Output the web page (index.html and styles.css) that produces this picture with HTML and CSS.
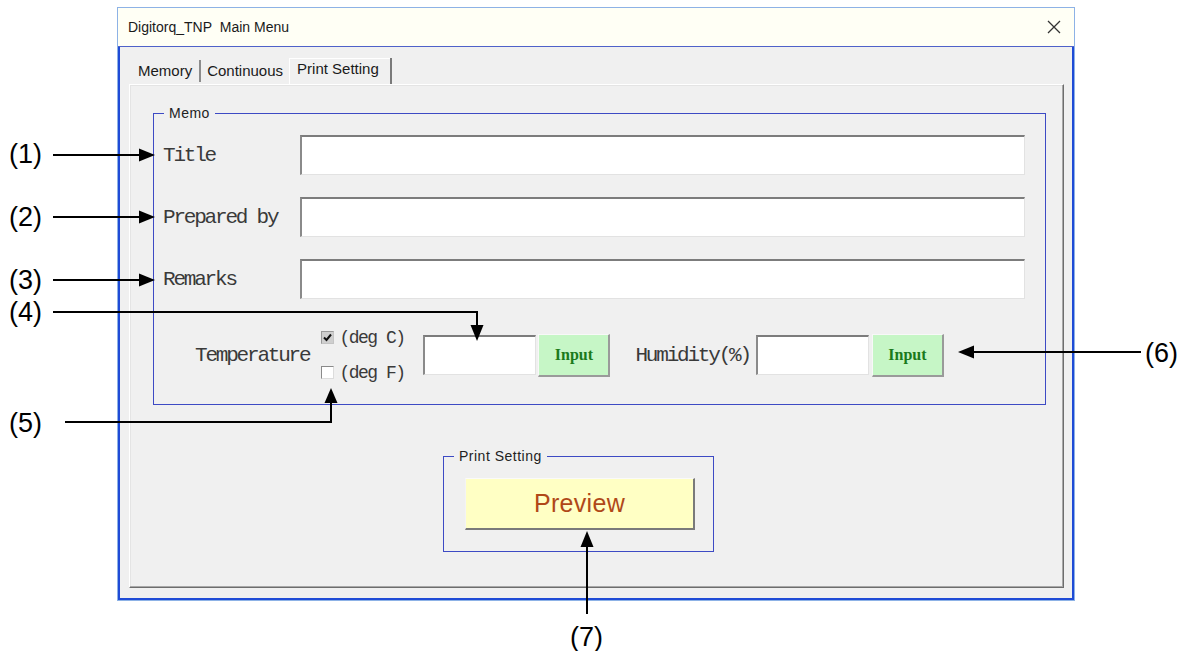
FILE: index.html
```html
<!DOCTYPE html>
<html lang="en">
<head>
  <meta charset="UTF-8">
  <title>Digitorq_TNP Main Menu</title>
  <link rel="stylesheet" href="styles.css">
</head>
<body>

<div class="page">
  <div class="window">
    <div class="titlebar">
      <span class="caption">Digitorq_TNP&nbsp; Main Menu</span>
      <svg class="close" width="14" height="14" viewBox="0 0 14 14">
        <path d="M1 1L13 13M13 1L1 13" stroke="#333" stroke-width="1.3" fill="none"/>
      </svg>
    </div>

    <div class="client">
      <div class="tabs">
        <span class="tab tab-memory">Memory</span>
        <span class="tab tab-cont">Continuous</span>
        <span class="tab tab-print active">Print Setting</span>
      </div>

      <div class="panel">
        <div class="group memo">
          <span class="legend">Memo</span>

          <div class="field">
            <span class="lbl">Title</span>
            <div class="textbox wide"></div>
          </div>
          <div class="field">
            <span class="lbl">Prepared by</span>
            <div class="textbox wide"></div>
          </div>
          <div class="field">
            <span class="lbl">Remarks</span>
            <div class="textbox wide"></div>
          </div>

          <div class="temp-row">
            <span class="lbl temp-lbl">Temperature</span>
            <div class="units">
              <div class="unit">
                <span class="check on">
                  <svg width="11" height="11" viewBox="0 0 11 11"><path d="M2 5.5L4.5 8L9 2.5" stroke="#111" stroke-width="2" fill="none"/></svg>
                </span>(deg C)
              </div>
              <div class="unit"><span class="check"></span>(deg F)</div>
            </div>
            <div class="textbox small temp-box"></div>
            <button class="input-btn">Input</button>
            <span class="lbl hum-lbl">Humidity(%)</span>
            <div class="textbox small hum-box"></div>
            <button class="input-btn hum-btn">Input</button>
          </div>
        </div>

        <div class="group print">
          <span class="legend">Print Setting</span>
          <button class="preview">Preview</button>
        </div>
      </div>
    </div>
  </div>

  <!-- callout arrows and numbers drawn over the screenshot -->
  <svg class="callouts" width="1189" height="651" viewBox="0 0 1189 651">
    <g stroke="#000" stroke-width="2" fill="none">
      <path d="M53 155H140"/>
      <path d="M53 217H140"/>
      <path d="M53 280H140"/>
      <path d="M53 312H477V327"/>
      <path d="M65 422H331V402"/>
      <path d="M1141 352H972"/>
      <path d="M587 614V545"/>
    </g>
    <g fill="#000">
      <path d="M155 155L139 148.5V161.5Z"/>
      <path d="M155 217L139 210.5V223.5Z"/>
      <path d="M155 280L139 273.5V286.5Z"/>
      <path d="M477 341L470.5 325H483.5Z"/>
      <path d="M331 388L324.5 403H337.5Z"/>
      <path d="M958 352L974 345.5V358.5Z"/>
      <path d="M587 531L580.5 547H593.5Z"/>
    </g>
    <g class="nums">
      <text x="9" y="163">(1)</text>
      <text x="9" y="226">(2)</text>
      <text x="9" y="289">(3)</text>
      <text x="9" y="321">(4)</text>
      <text x="9" y="432">(5)</text>
      <text x="1145" y="362">(6)</text>
      <text x="570" y="646">(7)</text>
    </g>
  </svg>
</div>

</body>
</html>
```

FILE: styles.css
```css
body {
  margin: 0;
  background: #fff;
  font-family: "Liberation Sans", Arial, sans-serif;
}

.page {
  position: relative;
  width: 1189px;
  height: 651px;
  box-sizing: border-box;
  padding: 7px 0 0 117px;
  overflow: hidden;
}

.window {
  width: 958px;
  height: 594px;
  box-sizing: border-box;
  border: 1px solid #8db2e6;
  display: flex;
  flex-direction: column;
}

.titlebar {
  flex: none;
  height: 38px;
  background: #fffff5;
  border-bottom: 1px solid #4f62c9;
  display: flex;
  align-items: center;
  justify-content: space-between;
  padding: 0 13px 0 10px;
}

.caption {
  font-size: 14px;
  color: #1a1a1a;
}

.client {
  flex: 1;
  background: #f0f0f0;
  border: 2px solid #1f4bd6;
  border-top: none;
  padding: 11px 8px 10px 9px;
  display: flex;
  flex-direction: column;
}

/* tab strip */
.tabs {
  display: flex;
  align-items: flex-end;
  height: 26px;
  padding-left: 2px;
}

.tab {
  font-size: 15px;
  color: #1a1a1a;
  height: 22px;
  line-height: 22px;
  margin-bottom: 2px;
}

.tab-memory {
  padding: 0 7px;
  border-right: 2px solid #8c8c8c;
}

.tab-cont {
  padding: 0 6px;
}

.tab.active {
  height: 26px;
  line-height: 21px;
  margin-bottom: 0;
  padding: 0 11px 0 8px;
  border-right: 2px solid #7a7a7a;
  box-shadow: inset 1px 1px 0 #fff;
}

.panel {
  flex: 1;
  border: 1px solid;
  border-color: #fff #6d6d6d #6d6d6d #fff;
  box-shadow: inset -1px -1px 0 #a8a8a8, inset 1px 1px 0 #e4e4e4;
  padding: 28px 17px 0 23px;
}

/* frames */
.group {
  position: relative;
  box-sizing: border-box;
  border: 1px solid #3d4ac4;
}

.legend {
  position: absolute;
  top: -9px;
  left: 10px;
  padding: 0 5px;
  background: #f0f0f0;
  font-size: 14px;
  line-height: 16px;
  letter-spacing: 0.5px;
  color: #222;
}

.memo {
  height: 292px;
  padding: 21px 20px 0 9px;
}

.field {
  display: flex;
  align-items: center;
  height: 40px;
  margin-bottom: 22px;
}

.lbl {
  font-family: "Liberation Mono", "DejaVu Sans Mono", monospace;
  font-size: 21px;
  letter-spacing: -2.2px;
  color: #3a3a3a;
}

.field .lbl {
  width: 137px;
  flex: none;
}

.textbox {
  height: 40px;
  box-sizing: border-box;
  background: #fff;
  border-style: solid;
  border-width: 2px 1px 1px 2px;
  border-color: #7c7c7c #e2e2e2 #e2e2e2 #8a8a8a;
}

.textbox.wide {
  flex: 1;
}

.textbox.small {
  width: 113px;
  flex: none;
}

/* margin collapses with the field above, so 30px is the real gap */
.temp-row {
  display: flex;
  align-items: center;
  height: 52px;
  margin-top: 30px;
}

.temp-lbl {
  margin-left: 32px;
}

.units {
  width: 84px;
  margin-left: 12px;
  display: flex;
  flex-direction: column;
  gap: 17px;
}

.unit {
  display: flex;
  align-items: center;
  height: 18px;
  font-family: "Liberation Mono", "DejaVu Sans Mono", monospace;
  font-size: 18px;
  letter-spacing: -1.5px;
  color: #3a3a3a;
}

.check {
  width: 13px;
  height: 13px;
  box-sizing: border-box;
  margin-right: 5px;
  border: 1px solid;
  border-color: #8a8a8a #dcdcdc #dcdcdc #8a8a8a;
  background: #fff;
  display: flex;
  align-items: center;
  justify-content: center;
}

.check.on {
  background: #cfcfcf;
  border-color: #9a9a9a #c4c4c4 #c4c4c4 #9a9a9a;
}

.temp-box {
  margin-left: 18px;
}

.input-btn {
  width: 72px;
  height: 43px;
  margin-left: 2px;
  padding: 0;
  background: #c6f6c6;
  border-style: solid;
  border-width: 1px 2px 2px 1px;
  border-color: #f8f8f8 #9a9a9a #9a9a9a #f8f8f8;
  font-family: "Liberation Serif", "Times New Roman", serif;
  font-weight: bold;
  font-size: 16px;
  color: #1b7a1b;
}

.hum-lbl {
  margin-left: 25px;
}

.hum-box {
  width: 112px;
  margin-left: 6px;
}

.hum-btn {
  margin-left: 3px;
}

.print {
  width: 271px;
  height: 96px;
  margin: 51px 0 0 290px;
  padding: 21px 0 0 21px;
}

.preview {
  width: 230px;
  height: 52px;
  padding: 0;
  background: #ffffc4;
  border-style: solid;
  border-width: 1px 2px 2px 1px;
  border-color: #fafafa #7a7a7a #7a7a7a #f4f4f4;
  font-family: "Liberation Sans", Arial, sans-serif;
  font-size: 25px;
  letter-spacing: 0.3px;
  color: #b04818;
}

.callouts {
  position: absolute;
  top: 0;
  left: 0;
  pointer-events: none;
}

.nums text {
  font-family: "Liberation Sans", Arial, sans-serif;
  font-size: 27px;
  fill: #000;
}
```
